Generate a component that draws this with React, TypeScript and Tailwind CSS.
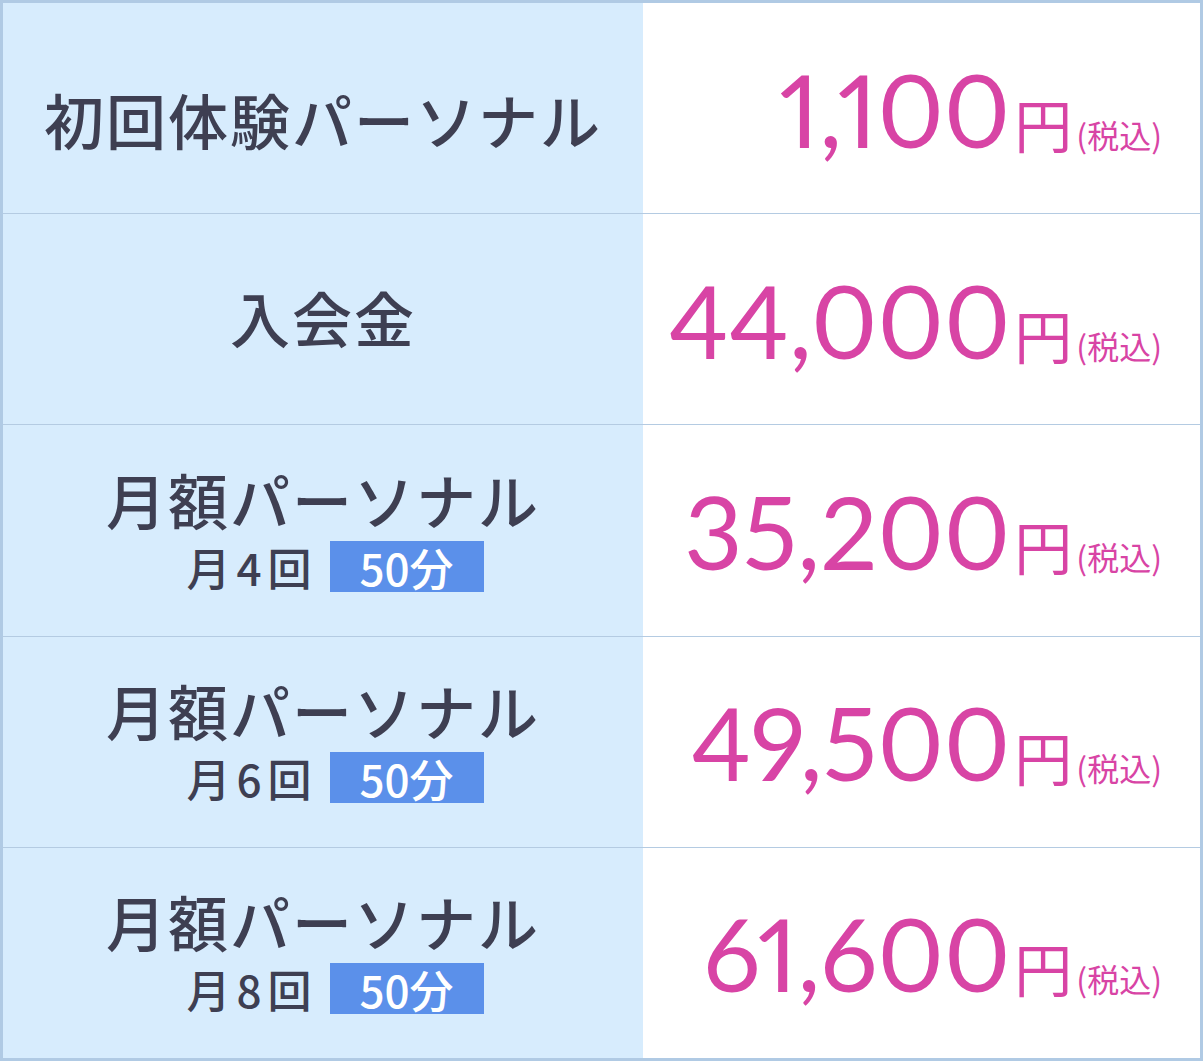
const jp = { fontFamily: '"Noto Sans CJK JP", "Noto Sans", sans-serif' };

type Plan = {
  label: string;
  times?: string;
  price: string;
};

const plans: Plan[] = [
  { label: "初回体験パーソナル", price: "1,100" },
  { label: "入会金", price: "44,000" },
  { label: "月額パーソナル", times: "月4回", price: "35,200" },
  { label: "月額パーソナル", times: "月6回", price: "49,500" },
  { label: "月額パーソナル", times: "月8回", price: "61,600" },
];

function Label({ plan, first }: { plan: Plan; first: boolean }) {
  if (!plan.times) {
    return (
      <div
        className={`text-[60px] leading-none font-medium tracking-[2px] text-[#3e3f52] ${first ? "pt-[22px]" : "pb-[4px]"}`}
        style={jp}
      >
        {plan.label}
      </div>
    );
  }
  return (
    <div className="flex flex-col items-center" style={jp}>
      <div className="text-[60px] leading-none font-medium tracking-[2px] text-[#3e3f52]">{plan.label}</div>
      <div className="mt-[12px] flex items-center pl-[24px]">
        <span className="text-[44px] leading-none font-medium tracking-[6px] text-[#3e3f52]">{plan.times}</span>
        <span className="ml-[12px] flex h-[51px] w-[154px] items-center justify-center bg-[#5b90ea] text-[44px] font-medium leading-[44px] text-white">
          50分
        </span>
      </div>
    </div>
  );
}

function Price({ value }: { value: string }) {
  return (
    <div className="flex items-baseline text-[#d844a5] pt-[2px]">
      <span
        className="text-[101px] leading-none proportional-nums"
        style={{ fontFamily: 'Lato, "Noto Sans", sans-serif' }}
      >
        {value}
      </span>
      <span className="ml-[4px] text-[58px] leading-none" style={jp}>
        円
      </span>
      <span className="ml-[4px] text-[32px] leading-none" style={jp}>
        (税込)
      </span>
    </div>
  );
}

export default function App() {
  return (
    <div className="h-[1061px] w-[1203px] bg-white">
      <div className="flex h-full w-full flex-col border-[3px] border-[#b0cae4]">
        {plans.map((plan, i) => (
          <div
            key={i}
            className={`flex flex-1 ${i > 0 ? "border-t border-[#b4cbe2]" : ""}`}
          >
            <div className="flex w-[640px] items-center justify-center bg-[#d7ecfd]">
              <Label plan={plan} first={i === 0} />
            </div>
            <div className="flex flex-1 items-center justify-end bg-white pr-[38px]">
              <Price value={plan.price} />
            </div>
          </div>
        ))}
      </div>
    </div>
  );
}
